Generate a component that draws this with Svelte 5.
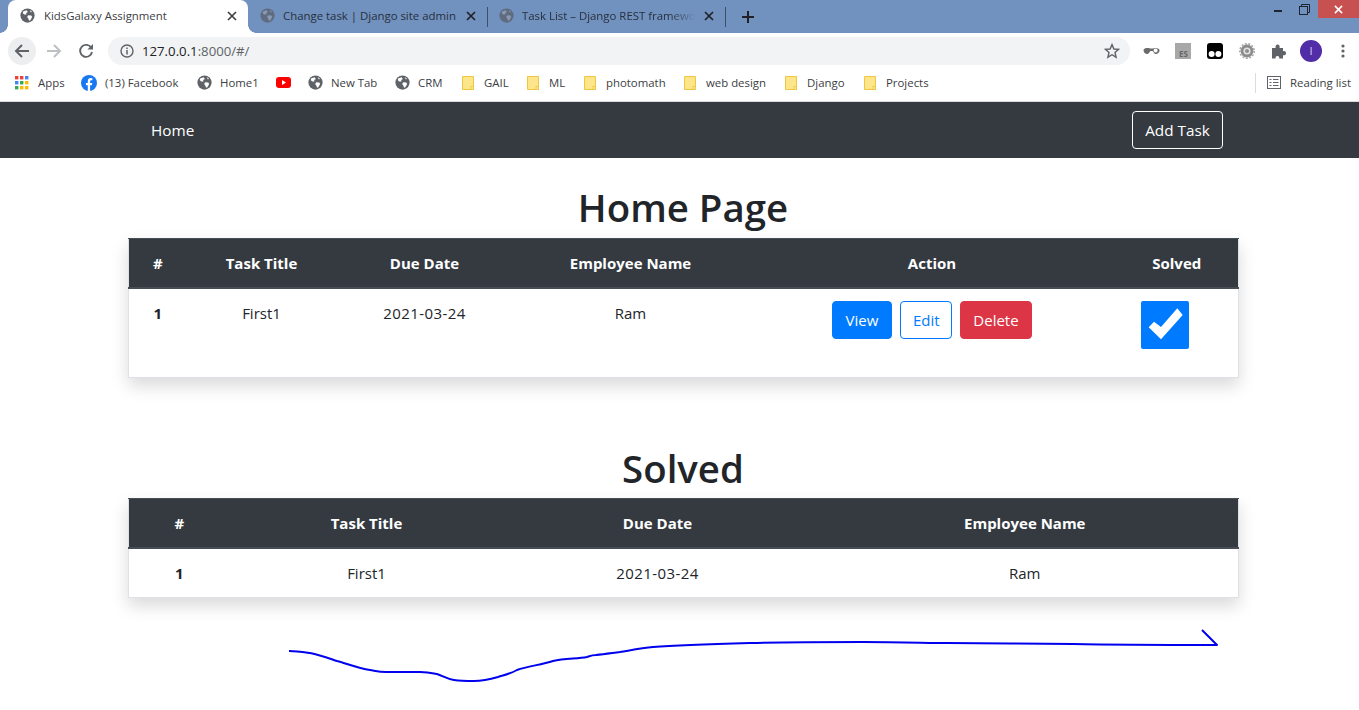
<script>
  const tabs = [
    { title: 'Change task | Django site admin', width: 239 },
    { title: 'Task List – Django REST framewo', width: 237 }
  ];

  const bookmarks = [
    { icon: 'apps', label: 'Apps', left: 15, gap: 9 },
    { icon: 'fb', label: '(13) Facebook', left: 81, gap: 8 },
    { icon: 'globe', label: 'Home1', left: 197, gap: 8 },
    { icon: 'yt', label: '', left: 276, gap: 0 },
    { icon: 'globe', label: 'New Tab', left: 308, gap: 8 },
    { icon: 'globe', label: 'CRM', left: 395, gap: 8 },
    { icon: 'folder', label: 'GAIL', left: 462, gap: 10 },
    { icon: 'folder', label: 'ML', left: 527, gap: 10 },
    { icon: 'folder', label: 'photomath', left: 584, gap: 10 },
    { icon: 'folder', label: 'web design', left: 684, gap: 10 },
    { icon: 'folder', label: 'Django', left: 785, gap: 10 },
    { icon: 'folder', label: 'Projects', left: 864, gap: 10 }
  ];

  const task = { id: 1, title: 'First1', due: '2021-03-24', employee: 'Ram' };

  // hand drawn arrow under the second table
  const scribble =
    'M289 651 C297 651 303 652 310 653 C320 655 328 658 337 661 C348 664 358 668 370 670 C376 671 379 672 386 672 C398 672 409 672 420 672 C428 672 432 673 437 674 C443 676 447 679 454 680 C461 681 468 681 474 681 C483 681 491 679 498 677 C504 675 510 674 517 670 C528 666 541 665 553 661 C565 658 577 659 587 657 C590 656 592 655 596 655 C605 654 612 653 620 652 C632 650 642 648 653 647 C680 645 715 644 750 643 C790 642 830 642 863 642 C900 642 930 643 947 643 C990 643 1030 644 1073 644 C1120 645 1170 645 1217 645 L1202 630';
</script>

{#snippet globe(color = '#5f6368', land = '#fff', size = 15)}
  <svg class="ico" width={size} height={size} viewBox="0 0 16 16">
    <circle cx="8" cy="8" r="7.6" fill={color} />
    <path d="M3.2 3.6 L7 2.4 L8.4 4.2 L6.6 5.4 L6.9 6.8 L4.6 7 L3 5.6 Z M8.8 7.6 L12 8 L13 9.6 L11 13 L9.6 13.6 L9 11.4 L7.6 9.6 Z M10.4 2.2 L13 4.2 L11.4 4.6 Z" fill={land} />
  </svg>
{/snippet}

{#snippet close(color = '#3c4043')}
  <svg class="ico" width="10" height="10" viewBox="0 0 10 10">
    <path d="M1 1 L9 9 M9 1 L1 9" stroke={color} stroke-width="1.7" fill="none" />
  </svg>
{/snippet}

<div class="browser">
  <div class="tabstrip">
    <div class="tab active">
      {@render globe()}
      <span class="tab-title">KidsGalaxy Assignment</span>
      {@render close()}
    </div>
    {#each tabs as tab}
      <div class="tab" style="width: {tab.width}px">
        {@render globe('#5f6b80', '#8a9ab3')}
        <span class="tab-title fade">{tab.title}</span>
        {@render close('#202124')}
      </div>
      <i class="tab-sep"></i>
    {/each}
    <svg class="newtab ico" width="14" height="14" viewBox="0 0 14 14">
      <path d="M7 1 V13 M1 7 H13" stroke="#202124" stroke-width="2" />
    </svg>
    <div class="winctl">
      <span class="win"><i class="min"></i></span>
      <span class="win">
        <svg width="11" height="11" viewBox="0 0 11 11" fill="none" stroke="#1e2530" stroke-width="1">
          <rect x="0.5" y="2.5" width="8" height="8" /><path d="M2.5 2.5 V0.5 H10.5 V8.5 H8.5" />
        </svg>
      </span>
      <span class="win red">
        <svg width="9" height="9" viewBox="0 0 10 10"><path d="M1 1 L9 9 M9 1 L1 9" stroke="#fff" stroke-width="1.7" /></svg>
      </span>
    </div>
  </div>

  <div class="toolbar">
    <span class="navbtn hover">
      <svg width="16" height="16" viewBox="0 0 16 16" fill="none" stroke="#5f6368" stroke-width="2"><path d="M15 8 H2 M8 2 L2 8 L8 14" /></svg>
    </span>
    <span class="navbtn">
      <svg width="16" height="16" viewBox="0 0 16 16" fill="none" stroke="#bdc1c6" stroke-width="2"><path d="M1 8 H14 M8 2 L14 8 L8 14" /></svg>
    </span>
    <span class="navbtn">
      <svg width="16" height="16" viewBox="0 0 16 16" fill="none"><path d="M13.4 5 A6 6 0 1 0 14 9" stroke="#5f6368" stroke-width="1.9" /><path d="M9.4 6.4 H15 V1 Z" fill="#5f6368" /></svg>
    </span>
    <div class="omnibox">
      <svg class="ico" width="14" height="14" viewBox="0 0 14 14" fill="none">
        <circle cx="7" cy="7" r="6" stroke="#5f6368" stroke-width="1.4" />
        <path d="M7 6 V10.4 M7 3.6 V5" stroke="#5f6368" stroke-width="1.5" />
      </svg>
      <span class="url">127.0.0.1<em>:8000/#/</em></span>
      <svg class="star ico" width="16" height="16" viewBox="0 0 16 16">
        <path d="M8 1.6 L9.9 6 L14.6 6.4 L11 9.5 L12.1 14.2 L8 11.7 L3.9 14.2 L5 9.5 L1.4 6.4 L6.1 6 Z" fill="none" stroke="#5f6368" stroke-width="1.4" />
      </svg>
    </div>
    <div class="exts">
      <svg class="ico glasses" width="17" height="8" viewBox="0 0 17 8">
        <path d="M0.5 3 C1 1 5 0.6 7 1.5 L10 1.5 C12 0.4 16 1 16.6 3 C16.6 6 14 7.6 12 7 L9.6 4 H7.6 L5 7 C3 7.6 0.5 6 0.5 3 Z" fill="#6b6b6b" />
        <circle cx="12.6" cy="3.6" r="2" fill="#fff" />
      </svg>
      <span class="ext-es">ES</span>
      <svg class="ico" width="16" height="16" viewBox="0 0 16 16">
        <rect width="16" height="16" rx="3" fill="#000" />
        <circle cx="4.6" cy="11" r="3" fill="#fff" /><circle cx="11.4" cy="11" r="3" fill="#fff" />
      </svg>
      <svg class="ico" width="16" height="16" viewBox="0 0 16 16">
        <circle cx="8" cy="8" r="6.4" fill="#8b8b8b" />
        <circle cx="8" cy="8" r="7.2" fill="none" stroke="#a9a9a9" stroke-width="1.6" stroke-dasharray="2 1.5" />
        <circle cx="8" cy="8" r="3.6" fill="#e2e2e2" /><circle cx="8" cy="8" r="2" fill="#8f8f8f" />
      </svg>
      <svg class="ico" width="15" height="15" viewBox="0 0 15 15">
        <path d="M1 4 H4.6 C4.2 1.4 5.4 0.6 6.6 0.6 C7.8 0.6 9 1.4 8.6 4 H12 V7.2 C14 6.8 15 7.8 15 9.2 C15 10.6 14 11.6 12 11.2 V14.6 H8.2 C8.6 12.8 7.6 12 6.4 12 C5.2 12 4.2 12.8 4.6 14.6 H1 Z" fill="#5f6368" />
      </svg>
      <span class="avatar">I</span>
      <svg class="ico dots" width="4" height="14" viewBox="0 0 4 14" fill="#5f6368">
        <circle cx="2" cy="2" r="1.6" /><circle cx="2" cy="7" r="1.6" /><circle cx="2" cy="12" r="1.6" />
      </svg>
    </div>
  </div>

  <div class="bookmarks">
    {#each bookmarks as b}
      <span class="bm" style="left: {b.left}px; gap: {b.gap}px">
        {#if b.icon === 'apps'}
          <svg class="ico" width="14" height="14" viewBox="0 0 14 14">
            {#each [0, 5, 10] as y, r}
              {#each [0, 5, 10] as x, c}
                <rect x={x} y={y} width="3.4" height="3.4" fill={[['#ea4335', '#ea4335', '#4285f4'], ['#4285f4', '#34a853', '#fbbc04'], ['#34a853', '#fbbc04', '#fbbc04']][r][c]} />
              {/each}
            {/each}
          </svg>
        {:else if b.icon === 'fb'}
          <svg class="ico" width="16" height="16" viewBox="0 0 16 16">
            <circle cx="8" cy="8" r="8" fill="#1877f2" />
            <path d="M6.8 16 V10.3 H4.9 V8 H6.8 V6.2 C6.8 4.2 8 3.1 9.8 3.1 L11.4 3.2 V5.2 H10.3 C9.4 5.2 9.1 5.7 9.1 6.3 V8 H11.3 L10.9 10.3 H9.1 V16 Z" fill="#fff" />
          </svg>
        {:else if b.icon === 'yt'}
          <svg class="ico" width="15" height="11" viewBox="0 0 15 11">
            <rect width="15" height="11" rx="3" fill="#f00" />
            <path d="M6 3 L10 5.5 L6 8 Z" fill="#fff" />
          </svg>
        {:else if b.icon === 'folder'}
          <svg class="ico" width="12" height="14" viewBox="0 0 12 14">
            <path d="M0.5 0.5 H11.5 V13.5 H0.5 Z" fill="#fde68a" stroke="#eec643" />
            <rect x="9" y="10.5" width="2.5" height="3" fill="#fde68a" stroke="#eec643" stroke-width="0.8" />
          </svg>
        {:else}
          {@render globe()}
        {/if}
        {#if b.label}<span>{b.label}</span>{/if}
      </span>
    {/each}
    <span class="reading">
      <i class="bm-sep"></i>
      <svg class="ico" width="14" height="13" viewBox="0 0 14 13" fill="none" stroke="#5f6368">
        <rect x="0.5" y="0.5" width="13" height="12" />
        <path d="M2.5 3.5 H4.5 M6 3.5 H11.5 M2.5 6.5 H4.5 M6 6.5 H11.5 M2.5 9.5 H4.5 M6 9.5 H11.5" />
      </svg>
      <span>Reading list</span>
    </span>
  </div>
</div>

<nav class="navbar">
  <a href="#/" class="nav-home">Home</a>
  <button class="btn-add">Add Task</button>
</nav>

<main class="page">
  <h1>Home Page</h1>
  <table class="tasks first">
    <colgroup><col style="width: 58px" /><col style="width: 150px" /><col style="width: 176px" /><col style="width: 236px" /><col style="width: 367px" /><col style="width: 123px" /></colgroup>
    <thead>
      <tr><th>#</th><th>Task Title</th><th>Due Date</th><th>Employee Name</th><th>Action</th><th>Solved</th></tr>
    </thead>
    <tbody>
      <tr>
        <td class="num">{task.id}</td>
        <td>{task.title}</td>
        <td class="date">{task.due}</td>
        <td>{task.employee}</td>
        <td>
          <div class="actions">
            <button class="btn view">View</button>
            <button class="btn edit">Edit</button>
            <button class="btn del">Delete</button>
          </div>
        </td>
        <td>
          <span class="check">
            <svg width="48" height="48" viewBox="0 0 48 48">
              <path d="M7.7 26.3 L13 20.7 L20 26 L36.3 7.3 L41.7 14 L20 38.3 Z" fill="#fff" />
            </svg>
          </span>
        </td>
      </tr>
    </tbody>
  </table>

  <h1 class="second">Solved</h1>
  <table class="tasks">
    <colgroup><col style="width: 101px" /><col style="width: 274px" /><col style="width: 308px" /><col style="width: 427px" /></colgroup>
    <thead>
      <tr><th>#</th><th>Task Title</th><th>Due Date</th><th>Employee Name</th></tr>
    </thead>
    <tbody>
      <tr>
        <td class="num">{task.id}</td>
        <td>{task.title}</td>
        <td class="date">{task.due}</td>
        <td>{task.employee}</td>
      </tr>
    </tbody>
  </table>
</main>

<svg class="scribble" width="1359" height="710" viewBox="0 0 1359 710">
  <path d={scribble} fill="none" stroke="#0000ee" stroke-width="2" stroke-linejoin="round" />
</svg>

<style>
  :global(body) {
    background: #fff;
    font-family: 'Open Sans', 'Noto Sans', sans-serif;
    color: #212529;
  }
  .ico {
    flex: none;
    display: block;
  }

  /* browser chrome */
  .browser {
    font-size: 11.4px;
    color: #3c4043;
  }
  .tabstrip {
    display: flex;
    align-items: center;
    height: 33px;
    background: #7191bf;
    padding-left: 8px;
    position: relative;
  }
  .tab {
    display: flex;
    align-items: center;
    gap: 8px;
    box-sizing: border-box;
    height: 33px;
    padding: 0 11px 2px 12px;
    color: #28303c;
  }
  .tab-sep + .tab {
    padding-left: 11px;
  }
  .tab.active {
    position: relative;
    width: 240px;
    gap: 9px;
    background: #fff;
    border-radius: 8px 8px 0 0;
    color: #3c4043;
  }
  .tab.active::before,
  .tab.active::after {
    content: '';
    position: absolute;
    bottom: 0;
    width: 8px;
    height: 8px;
  }
  .tab.active::before {
    left: -8px;
    background: radial-gradient(circle at 0 0, transparent 7.5px, #fff 8px);
  }
  .tab.active::after {
    right: -8px;
    background: radial-gradient(circle at 100% 0, transparent 7.5px, #fff 8px);
  }
  .tab-title {
    flex: 1;
    overflow: hidden;
    white-space: nowrap;
  }
  .tab-sep ~ .tab .fade {
    mask-image: linear-gradient(to right, #000 85%, transparent);
  }
  .tab-sep {
    flex: none;
    width: 1px;
    height: 20px;
    background: #3f4f66;
  }
  .newtab {
    margin-left: 15px;
  }
  .winctl {
    margin-left: auto;
    align-self: flex-start;
    display: flex;
    height: 18px;
  }
  .win {
    width: 27px;
    display: flex;
    align-items: center;
    justify-content: center;
  }
  .win.red {
    width: 41px;
    background: #c75050;
  }
  .min {
    width: 8px;
    height: 2px;
    background: #1e2530;
    margin-top: 4px;
  }
  .toolbar {
    display: flex;
    align-items: center;
    height: 36px;
    padding-left: 8px;
    background: #fff;
  }
  .navbtn {
    width: 28px;
    height: 28px;
    margin-right: 4px;
    border-radius: 50%;
    display: flex;
    align-items: center;
    justify-content: center;
  }
  .navbtn:nth-child(3) {
    margin-right: 8px;
  }
  .navbtn.hover {
    background: #edeeef;
  }
  .omnibox {
    display: flex;
    align-items: center;
    gap: 8px;
    box-sizing: border-box;
    width: 1022px;
    height: 28px;
    padding: 0 10px 0 12px;
    border-radius: 14px;
    background: #f1f3f4;
  }
  .url {
    font-size: 13.2px;
    color: #202124;
  }
  .url em {
    font-style: normal;
    color: #5f6368;
  }
  .star {
    margin-left: auto;
  }
  .exts {
    display: flex;
    align-items: center;
    gap: 16px;
    margin-left: 13px;
  }
  .glasses {
    margin-right: -1px;
  }
  .dots {
    margin-left: 3px;
  }
  .ext-es {
    box-sizing: border-box;
    width: 16px;
    height: 16px;
    padding: 5px 0 0 4px;
    background: #a8a8a8;
    color: #666;
    font-size: 8px;
    font-weight: 700;
    line-height: 11px;
  }
  .avatar {
    width: 22px;
    height: 22px;
    margin-left: -2px;
    border-radius: 50%;
    background: #512da8;
    color: #d8cdf0;
    font-size: 11px;
    line-height: 22px;
    text-align: center;
  }
  .bookmarks {
    position: relative;
    box-sizing: border-box;
    height: 33px;
    background: #fff;
    border-bottom: 1px solid #dadce0;
  }
  .bm {
    position: absolute;
    top: 0;
    height: 27px;
    display: flex;
    align-items: center;
    white-space: nowrap;
  }
  .reading {
    position: absolute;
    left: 1255px;
    top: 0;
    height: 27px;
    display: flex;
    align-items: center;
    gap: 11px;
    white-space: nowrap;
  }
  .bm-sep {
    width: 1px;
    height: 20px;
    background: #dadce0;
  }
  .reading span {
    margin-left: -2px;
  }

  /* page */
  .navbar {
    display: flex;
    align-items: center;
    justify-content: space-between;
    box-sizing: border-box;
    height: 56px;
    padding: 0 136px 0 151px;
    background: #343a40;
  }
  .nav-home {
    margin-top: -1px;
    color: #fff;
    font-size: 15.3px;
    text-decoration: none;
  }
  .btn-add {
    width: 91px;
    height: 38px;
    padding: 0 0 1px;
    border: 1px solid #fff;
    border-radius: 4px;
    background: transparent;
    color: #fff;
    font: inherit;
    font-size: 15.3px;
  }
  .page {
    width: 1110px;
    margin-left: 128px;
    padding-bottom: 113px;
  }
  h1 {
    margin: 0;
    height: 80px;
    padding-top: 26px;
    box-sizing: border-box;
    font-size: 38.4px;
    font-weight: 600;
    line-height: 46px;
    text-align: center;
  }
  h1.second {
    height: 120px;
    padding-top: 67px;
  }
  .tasks {
    width: 1110px;
    table-layout: fixed;
    border-collapse: collapse;
    border: 1px solid #dee2e6;
    font-size: 15px;
    text-align: center;
    background: #fff;
    box-shadow: 0 8px 16px rgba(0, 0, 0, 0.15);
  }
  th {
    height: 49px;
    box-sizing: border-box;
    padding: 0;
    background: #343a40;
    color: #fff;
    font-weight: 700;
    border-top: 1px solid #454d55;
    border-bottom: 2px solid #454d55;
  }
  td {
    height: 48px;
    padding: 0;
    color: #212529;
  }
  .num {
    font-weight: 700;
  }
  .date {
    letter-spacing: 0.4px;
  }
  .first td {
    height: 90px;
    padding-top: 12px;
    box-sizing: border-box;
    vertical-align: top;
    line-height: 24px;
  }
  .actions {
    display: flex;
    justify-content: center;
    gap: 8px;
  }
  .btn {
    height: 38px;
    padding: 0 12px;
    border: 1px solid #007bff;
    border-radius: 4px;
    font: inherit;
    font-size: 15px;
    background: #007bff;
    color: #fff;
  }
  .btn.view {
    width: 60px;
  }
  .btn.edit {
    width: 52px;
    background: #fff;
    color: #007bff;
  }
  .btn.del {
    width: 72px;
    background: #dc3545;
    border-color: #dc3545;
  }
  .check {
    display: block;
    width: 48px;
    height: 48px;
    margin-left: 25px;
    background: #007bff;
    border-radius: 2px;
  }
  .check svg {
    display: block;
  }
  .scribble {
    position: absolute;
    left: 0;
    top: 0;
    pointer-events: none;
  }
</style>
